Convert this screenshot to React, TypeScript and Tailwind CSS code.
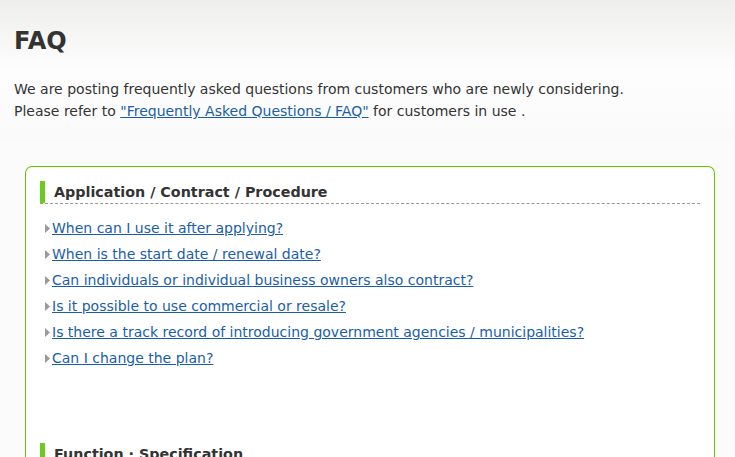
import React from "react";

const links = [
  "When can I use it after applying?",
  "When is the start date / renewal date?",
  "Can individuals or individual business owners also contract?",
  "Is it possible to use commercial or resale?",
  "Is there a track record of introducing government agencies / municipalities?",
  "Can I change the plan?",
];

function Bullet() {
  return (
    <svg width="5" height="9" viewBox="0 0 5 9" className="mr-[2px] shrink-0">
      <path d="M0 0 L5 4.5 L0 9 Z" fill="#9a9a9a" />
    </svg>
  );
}

export default function App() {
  return (
    <div
      className="min-h-[457px] w-full overflow-hidden bg-[#fbfbfb] bg-gradient-to-b from-[#eeeeec] via-[#fdfdfd] to-[#fafafa] bg-[length:100%_140px] bg-no-repeat text-[#333333]"
      style={{ fontFamily: "'DejaVu Sans', Verdana, sans-serif" }}
    >
      <div className="pl-[14px] pt-[27px]">
        <h1 className="text-[24px] font-bold leading-[28px] text-[#333333]">FAQ</h1>
        <p className="mt-[23px] text-[14px] leading-[22px]">
          We are posting frequently asked questions from customers who are newly considering.
          <br />
          Please refer to{" "}
          <a href="#" className="text-[#1a5ea8] underline">
            "Frequently Asked Questions / FAQ"
          </a>{" "}
          for customers in use .
        </p>
      </div>
      <div className="ml-[25px] mt-[44px] w-[690px] rounded-t-[7px] border border-b-0 border-[#66c400] bg-white px-[14px] pt-[14px] pb-[40px]">
        <h2 className="border-b border-l-[5px] border-dashed border-b-[#9a9a9a] border-l-[#6ccb1c] [border-left-style:solid] pl-[9px] text-[14.3px] font-bold leading-[22px] text-[#333333]">
          Application / Contract / Procedure
        </h2>
        <ul className="mt-[13px] flex flex-col gap-[4px] pl-[5px]">
          {links.map((t) => (
            <li key={t} className="flex items-center text-[14px] leading-[22px]">
              <Bullet />
              <a href="#" className="text-[#1a5ea8] underline">
                {t}
              </a>
            </li>
          ))}
        </ul>
        <h2 className="mt-[74px] border-l-[5px] border-l-[#6ccb1c] pl-[9px] text-[14.3px] font-bold leading-[22px] text-[#333333]">
          Function · Specification
        </h2>
      </div>
    </div>
  );
}
